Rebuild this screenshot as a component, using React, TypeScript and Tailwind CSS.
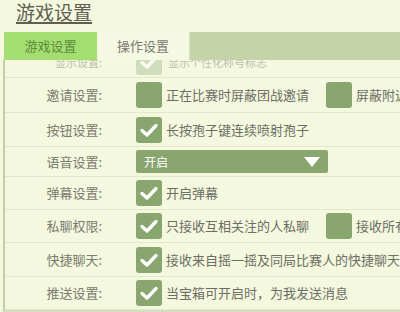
import React from "react";

const Check = ({ checked, faded }: { checked?: boolean; faded?: boolean }) => (
  <div
    className={`w-[26px] h-[26px] shrink-0 rounded-[3px] flex items-center justify-center ${
      faded ? "bg-[#bccaa6]" : "bg-[#88a66d]"
    }`}
  >
    {checked && (
      <svg width="20" height="16" viewBox="0 0 20 16">
        <path
          d="M3 8.5 L8 13 L17 3.5"
          fill="none"
          stroke="#ffffff"
          strokeWidth="3.4"
          strokeLinecap="round"
          strokeLinejoin="round"
        />
      </svg>
    )}
  </div>
);

const Row = ({
  label,
  h,
  children,
}: {
  label: string;
  h: string;
  children: React.ReactNode;
}) => (
  <div className={`flex items-center border-b border-[#e1e8cc] ${h}`}>
    <div className="w-[97px] shrink-0 text-right text-[13px] text-[#7b7b70]">
      {label}
    </div>
    <div className="ml-[34px] flex items-center whitespace-nowrap text-[13px] text-[#6e6e64]">
      {children}
    </div>
  </div>
);

export default function App() {
  return (
    <div
      className="w-[400px] h-[312px] overflow-hidden bg-[#f3f8df] relative"
      style={{ fontFamily: '"Noto Sans CJK SC", "Noto Sans", sans-serif' }}
    >
      <div className="h-[32px] pl-[16px]">
        <span className="text-[19px] leading-[24px] text-[#5e5e52] underline decoration-[1.5px] underline-offset-[2px]">
          游戏设置
        </span>
      </div>
      <div className="ml-[4px] h-[28px] flex">
        <div className="w-[93px] bg-[#a4de70] flex items-center justify-center text-[13px] text-[#5c8a3c]">
          游戏设置
        </div>
        <div className="w-[93px] bg-[#f5f9e4] flex items-center justify-center text-[13px] text-[#7a7a70] border-r border-[#d3dcbc]">
          操作设置
        </div>
        <div className="flex-1 bg-[#c6d3aa]" />
      </div>
      <div className="ml-[3px] border-l-2 border-[#c3cfa8] border-b-2 border-b-[#d5dec0]">
        <div className="h-[18px] overflow-hidden border-b border-[#e1e8cc]">
          <div className="-mt-[14px] h-[32px] flex items-center opacity-60">
            <div className="w-[97px] shrink-0 text-right text-[11px] text-[#9a9a90]">
              显示设置:
            </div>
            <div className="ml-[34px] flex items-center gap-[6px] text-[11px] text-[#9a9a90]">
              <Check checked faded />
              显示个性化称号标志
            </div>
          </div>
        </div>
        <Row label="邀请设置:" h="h-[35px]">
          <Check />
          <span className="ml-[4px]">正在比赛时屏蔽团战邀请</span>
          <div className="ml-[17px]">
            <Check />
          </div>
          <span className="ml-[4px]">屏蔽附近的人邀请</span>
        </Row>
        <Row label="按钮设置:" h="h-[34px]">
          <Check checked />
          <span className="ml-[4px]">长按孢子键连续喷射孢子</span>
        </Row>
        <Row label="语音设置:" h="h-[30px]">
          <div className="w-[192px] h-[23px] rounded-[2px] bg-[#88a66d] flex items-center justify-between pl-[8px] pr-[7px]">
            <span className="text-[12px] text-white">开启</span>
            <svg width="18" height="12" viewBox="0 0 18 12">
              <path d="M1 1 L17 1 L9 11 Z" fill="#ffffff" />
            </svg>
          </div>
        </Row>
        <Row label="弹幕设置:" h="h-[33px]">
          <Check checked />
          <span className="ml-[4px]">开启弹幕</span>
        </Row>
        <Row label="私聊权限:" h="h-[33px]">
          <Check checked />
          <span className="ml-[4px]">只接收互相关注的人私聊</span>
          <div className="ml-[17px]">
            <Check />
          </div>
          <span className="ml-[4px]">接收所有人私聊</span>
        </Row>
        <Row label="快捷聊天:" h="h-[34px]">
          <Check checked />
          <span className="ml-[4px]">接收来自摇一摇及同局比赛人的快捷聊天</span>
        </Row>
        <Row label="推送设置:" h="h-[33px]">
          <Check checked />
          <span className="ml-[4px]">当宝箱可开启时，为我发送消息</span>
        </Row>
      </div>
    </div>
  );
}
